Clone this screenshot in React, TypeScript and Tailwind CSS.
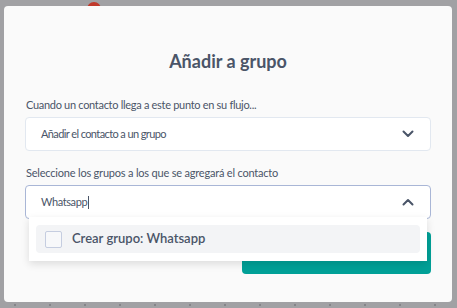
import React from "react"

const Chevron = ({ up = false }: { up?: boolean }) => (
  <svg width="12" height="8" viewBox="0 0 12 8" fill="none" className="shrink-0">
    <path
      d={up ? "M1.5 6.5 6 2l4.5 4.5" : "M1.5 1.5 6 6l4.5-4.5"}
      stroke="#4a5568"
      strokeWidth="2"
      strokeLinecap="round"
      strokeLinejoin="round"
    />
  </svg>
)

export default function App() {
  return (
    <div
      className="relative w-[457px] h-[308px] overflow-hidden bg-[#a1a1a4]"
      style={{ fontFamily: "Lato, 'Noto Sans', sans-serif" }}
    >
      {/* canvas behind the modal */}
      <div className="absolute left-[87px] top-[2px] w-[14px] h-[14px] rounded-full bg-[#c0392b]" />
      <div className="absolute left-0 bottom-[2px] w-full flex gap-[33px] pl-[14px]">
        {Array.from({ length: 13 }).map((_, i) => (
          <span key={i} className="w-[2px] h-[2px] rounded-full bg-[#7d7d80]" />
        ))}
      </div>

      <div className="relative ml-[4px] mt-[6px] w-[448px] h-[296px] rounded-[4px] bg-[#fafafa] px-[21px] pt-[43px]">
        <h1 className="text-center text-[18px] leading-[24px] font-bold text-[#4a5568]">
          Añadir a grupo
        </h1>

        <p className="mt-[24px] text-[11px] tracking-[-0.3px] leading-[16px] text-[#4a5568] pl-[1px]">
          Cuando un contacto llega a este punto en su flujo...
        </p>
        <div className="mt-[4px] h-[34px] flex items-center justify-between rounded-[4px] border border-[#e2e8f0] bg-white pl-[15px] pr-[16px]">
          <span className="text-[11px] tracking-[-0.6px] text-[#4a5568]">Añadir el contacto a un grupo</span>
          <Chevron />
        </div>

        <p className="mt-[14px] text-[11px] tracking-[-0.2px] leading-[16px] text-[#4a5568] pl-[1px]">
          Seleccione los grupos a los que se agregará el contacto
        </p>
        <div className="relative mt-[4px]">
          <div className="h-[34px] flex items-center justify-between rounded-[4px] border border-[#a9b6d6] bg-white pl-[15px] pr-[16px]">
            <span className="flex items-center text-[11px] tracking-[-0.4px] text-[#4a5568]">
              Whatsapp
              <span className="ml-[1px] w-px h-[13px] bg-[#4a5568]" />
            </span>
            <Chevron up />
          </div>

          <div className="absolute z-10 left-[4px] right-[4px] top-[32px] h-[44px] bg-white shadow-[0_3px_8px_rgba(0,0,0,0.12)] px-[7px] pt-[8px]">
            <div className="h-[28px] flex items-center rounded-[4px] bg-[#f3f4f6] pl-[9px]">
              <span className="w-[17px] h-[17px] rounded-[2px] border border-[#c5cde0] bg-[#f7f8fa]" />
              <span className="ml-[10px] text-[13px] font-semibold text-[#4a5568]">
                Crear grupo: Whatsapp
              </span>
            </div>
          </div>
        </div>

        <div className="flex justify-end mt-[13px]">
          <div className="w-[189px] h-[42px] rounded-[4px] bg-[#00a097]" />
        </div>
      </div>
    </div>
  )
}
